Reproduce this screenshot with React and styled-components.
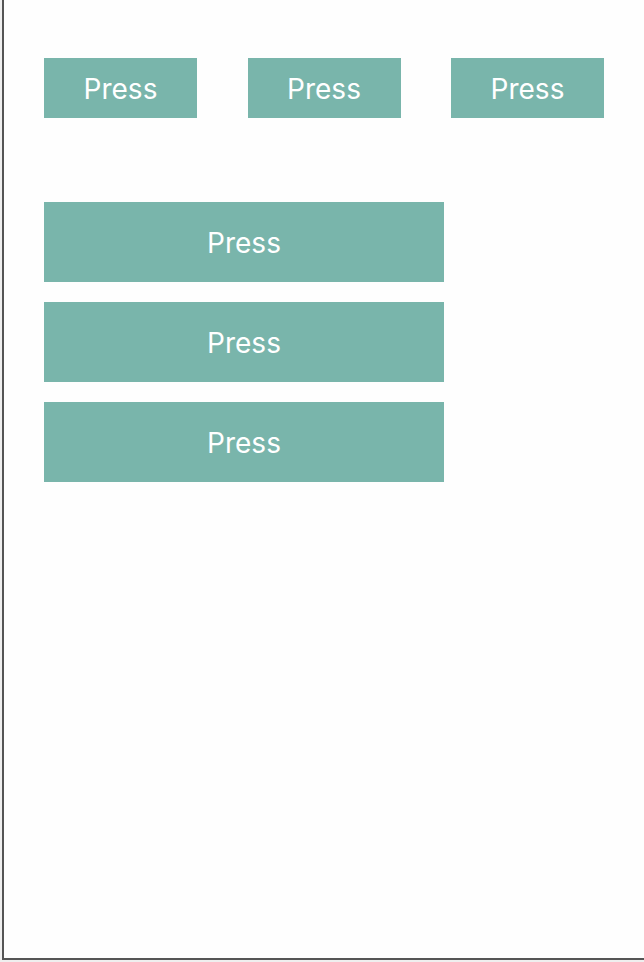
import React from "react";
import styled, { createGlobalStyle } from "styled-components";

const GlobalStyle = createGlobalStyle`
  html, body {
    margin: 0;
    padding: 0;
    background: #efefef;
  }
  body {
    font-family: Inter, "Noto Sans", sans-serif;
  }
`;

function App() {
  return (
    <>
      <GlobalStyle />
      <Frame>
        <Row>
          <Button>Press</Button>
          <Button>Press</Button>
          <Button>Press</Button>
        </Row>
        <Column>
          <Button wide>Press</Button>
          <Button wide>Press</Button>
          <Button wide>Press</Button>
        </Column>
      </Frame>
    </>
  );
}

export default App;

const Frame = styled.div`
  box-sizing: border-box;
  margin-left: 2px;
  width: 642px;
  height: 960px;
  background: #fefefe;
  border-left: 2px solid #555555;
  border-bottom: 2px solid #555555;
  padding: 58px 40px 0 40px;
`;

const Row = styled.div`
  display: flex;
  justify-content: space-between;
`;

const Column = styled.div`
  display: flex;
  flex-direction: column;
  gap: 20px;
  margin-top: 84px;
`;

const Button = styled.button`
  box-sizing: border-box;
  display: flex;
  align-items: center;
  justify-content: center;
  width: ${(p) => (p.wide ? "400px" : "153px")};
  height: ${(p) => (p.wide ? "80px" : "60px")};
  border: none;
  padding: 2px 0 0 0;
  background: #79b5ab;
  color: #ffffff;
  font-family: Inter, "Noto Sans", sans-serif;
  font-size: 28px;
  font-weight: 400;
`;
